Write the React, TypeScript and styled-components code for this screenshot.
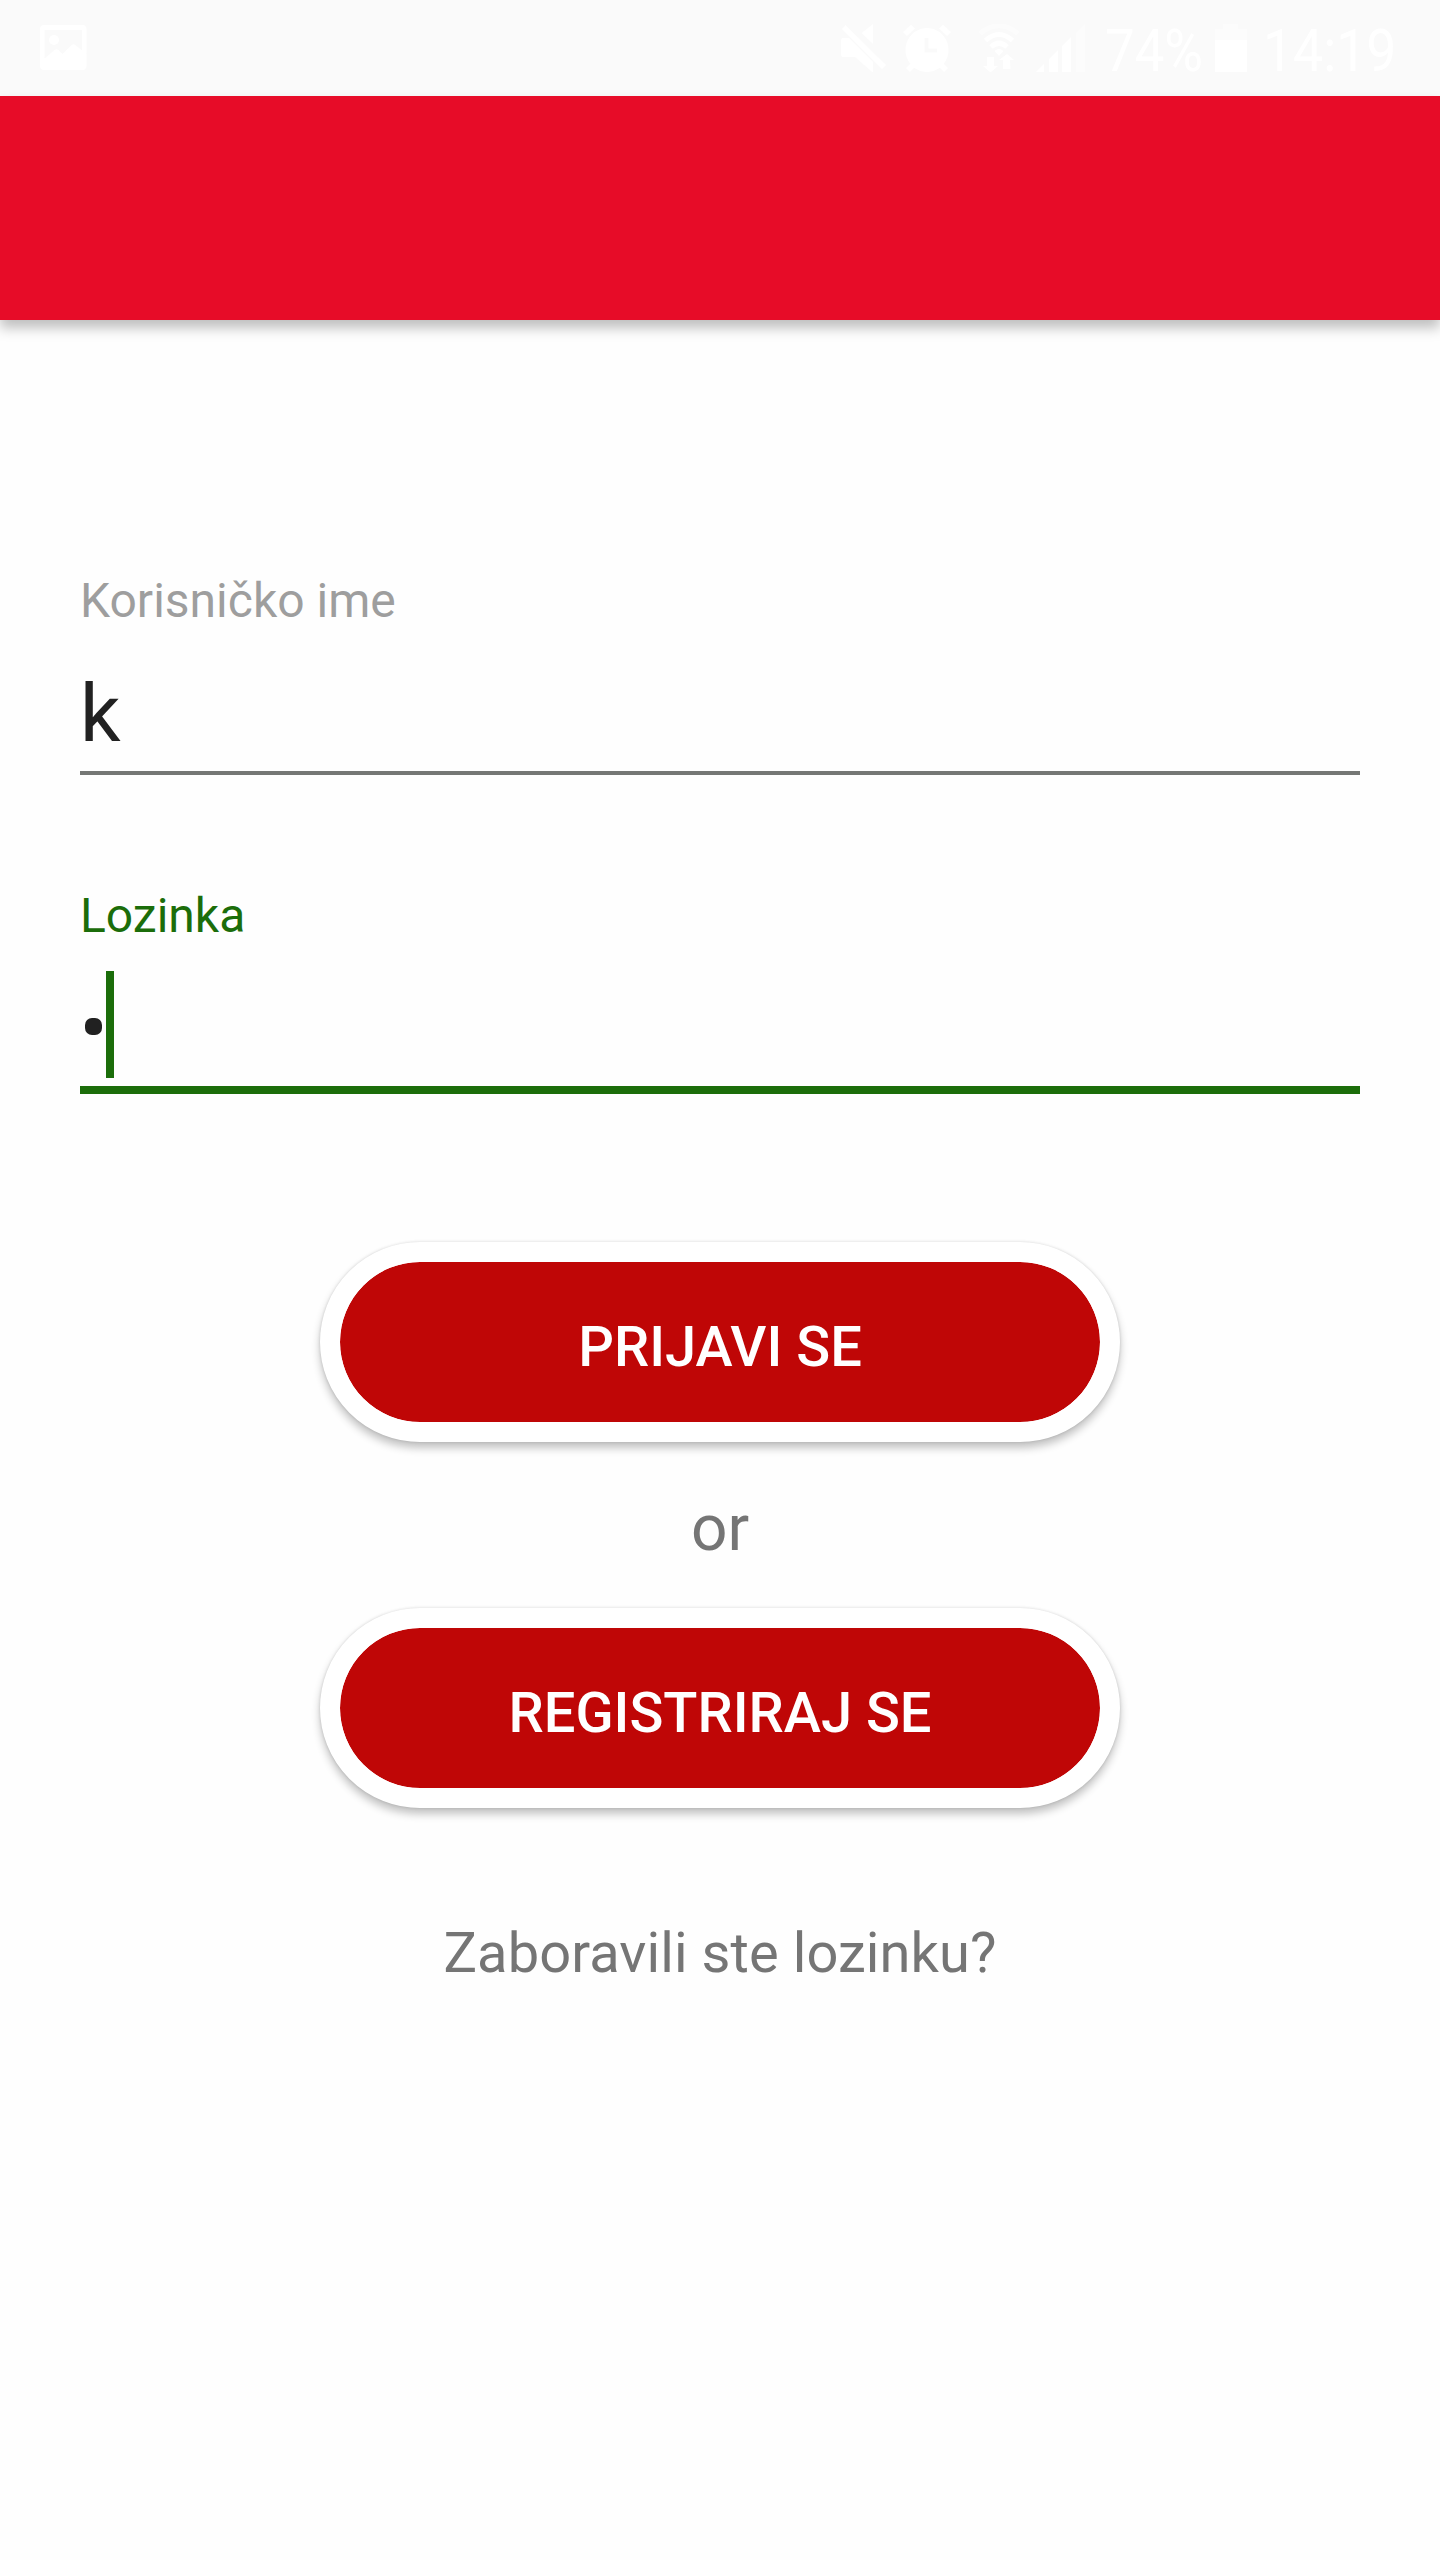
import React from "react";
import styled, { createGlobalStyle } from "styled-components";

const Global = createGlobalStyle`
  * { box-sizing: border-box; }
  body { margin: 0; background: #fefefe; }
`;

const Screen = styled.div`
  width: 1440px;
  height: 2560px;
  overflow: hidden;
  display: flex;
  flex-direction: column;
  background: #fefefe;
  font-family: Roboto, "Noto Sans", sans-serif;
`;

const StatusBar = styled.header`
  height: 96px;
  flex: none;
  display: flex;
  align-items: flex-start;
  padding: 24px 44px 0 40px;
  background: #fafafa;
  color: #fff;
`;

const Spacer = styled.div`
  flex: 1;
`;

const Glyph = styled.svg<{ $gap?: number }>`
  display: block;
  flex: none;
  fill: currentColor;
  margin-right: ${(p) => p.$gap ?? 0}px;
`;

const StatusText = styled.span<{ $width: number; $scale: number }>`
  flex: none;
  width: ${(p) => p.$width}px;
  font-size: 60px;
  line-height: 54px;
  white-space: nowrap;
  transform: scaleX(${(p) => p.$scale});
  transform-origin: left center;
`;

const AppBar = styled.div`
  height: 224px;
  flex: none;
  background: #e70c28;
  box-shadow: 0 8px 12px rgba(0, 0, 0, 0.25);
`;

const Form = styled.main`
  display: flex;
  flex-direction: column;
  align-items: center;
  padding: 253px 80px 0;
`;

const Field = styled.div<{ $last?: boolean }>`
  width: 100%;
  height: 206px;
  margin-bottom: ${(p) => (p.$last ? 148 : 109)}px;
`;

const Label = styled.div<{ $active?: boolean }>`
  font-size: 48px;
  line-height: 56px;
  color: ${(p) => (p.$active ? "#1b6d0a" : "#9e9e9e")};
`;

const ValueRow = styled.div`
  display: flex;
  align-items: flex-start;
  height: 107px;
  margin-top: 27px;
`;

const ValueText = styled.span`
  font-size: 80px;
  line-height: 117px;
  color: #212121;
`;

const PasswordDot = styled.span`
  width: 17px;
  height: 17px;
  margin: 47px 4px 0 5px;
  border-radius: 7px;
  background: #212121;
`;

const Caret = styled.span`
  width: 8px;
  height: 107px;
  background: #1b6d0a;
`;

const Underline = styled.div<{ $active?: boolean }>`
  margin-top: 8px;
  height: ${(p) => (p.$active ? 8 : 4)}px;
  background: ${(p) => (p.$active ? "#1b6d0a" : "#757775")};
`;

const PillButton = styled.button`
  width: 800px;
  height: 200px;
  flex: none;
  border: 20px solid #fff;
  border-radius: 100px;
  padding: 9px 0 0;
  background: #bf0606;
  background-clip: padding-box;
  color: #fff;
  font: 500 56px/66px Roboto, "Noto Sans", sans-serif;
  text-transform: uppercase;
  box-shadow: 0 6px 9px rgba(0, 0, 0, 0.24), 0 0 3px rgba(0, 0, 0, 0.14);
`;

const OrText = styled.div`
  margin: 49px 0 42px;
  font-size: 64px;
  line-height: 75px;
  color: #757575;
`;

const ForgotLink = styled.div`
  margin-top: 112px;
  font-size: 56px;
  line-height: 66px;
  letter-spacing: 0.08px;
  color: #757575;
`;

const PictureIcon = () => (
  <Glyph width="47" height="48" viewBox="0 0 47 48">
    <path
      fillRule="evenodd"
      d="M4 1h38.500a4 4 0 0 1 4 4v37a4 4 0 0 1-4 4H4a4 4 0 0 1-4-4V5a4 4 0 0 1 4-4zM4.500 6v28.500L14.500 26q2-1.500 4 0l4 4 9-9q2-1.500 4 0l6.500 5.500V6z"
    />
    <circle cx="14" cy="16" r="5" />
  </Glyph>
);

const MuteIcon = () => (
  <Glyph width="46" height="48" viewBox="0 0 46 48" $gap={16}>
    <path d="M32 0v20L20.500 9zM0 16q0-2 2-2h6l24 24v10h-1L14 33H2q-2 0-2-2z" />
    <path d="M4.500 1L45 41l-4 4L1 5z" />
  </Glyph>
);

const AlarmIcon = () => (
  <Glyph width="48" height="48" viewBox="0 0 48 48" $gap={27}>
    <path fillRule="evenodd" d="M24 4a21.500 22 0 1 0 .01 0zM21.500 14h4v10.500H34v4H21.500z" />
    <path d="M0 8l8-7.500 4 4L4 12zM48 8l-8-7.500-4 4L44 12zM3 44l6-6 4 4-6 6zM45 44l-6-6-4 4 6 6z" />
  </Glyph>
);

const WifiIcon = () => (
  <Glyph width="42" height="48" viewBox="0 0 42 48" $gap={16}>
    <g fill="none" stroke="currentColor" strokeWidth="5">
      <path opacity=".45" d="M2 9.500Q21-6 40 9.500" />
      <path d="M7.500 16.500Q21 4.500 34.500 16.500" />
      <path d="M13 23Q21 15.500 29 23" />
    </g>
    <path d="M16.500 27q4.500-4 9 0L21 32zM9 33h7v9h4l-7.500 6.500L5 42h4zM25 45v-9h-4l8-6 7 6h-4l.500 9z" />
  </Glyph>
);

const SignalIcon = () => (
  <Glyph width="50" height="48" viewBox="0 0 50 48" $gap={19}>
    <path d="M0 48l8-8v8zM13 35l9-9v22h-9zM26 22l9-9v35h-9z" />
    <path opacity=".35" d="M40 9l9-9v48h-9z" />
  </Glyph>
);

const BatteryIcon = () => (
  <Glyph width="32" height="48" viewBox="0 0 32 48" $gap={16}>
    <path opacity=".35" d="M0 5h8V0h15v5h9v11H0z" />
    <path d="M0 16h32v32H0z" />
  </Glyph>
);

export default function App() {
  return (
    <Screen>
      <Global />
      <StatusBar>
        <PictureIcon />
        <Spacer />
        <MuteIcon />
        <AlarmIcon />
        <WifiIcon />
        <SignalIcon />
        <StatusText $width={110} $scale={0.88}>74%</StatusText>
        <BatteryIcon />
        <StatusText $width={133} $scale={0.893}>14:19</StatusText>
      </StatusBar>
      <AppBar />
      <Form>
        <Field>
          <Label>Korisničko ime</Label>
          <ValueRow>
            <ValueText>k</ValueText>
          </ValueRow>
          <Underline />
        </Field>
        <Field $last>
          <Label $active>Lozinka</Label>
          <ValueRow>
            <PasswordDot />
            <Caret />
          </ValueRow>
          <Underline $active />
        </Field>
        <PillButton>Prijavi se</PillButton>
        <OrText>or</OrText>
        <PillButton>Registriraj se</PillButton>
        <ForgotLink>Zaboravili ste lozinku?</ForgotLink>
      </Form>
    </Screen>
  );
}
